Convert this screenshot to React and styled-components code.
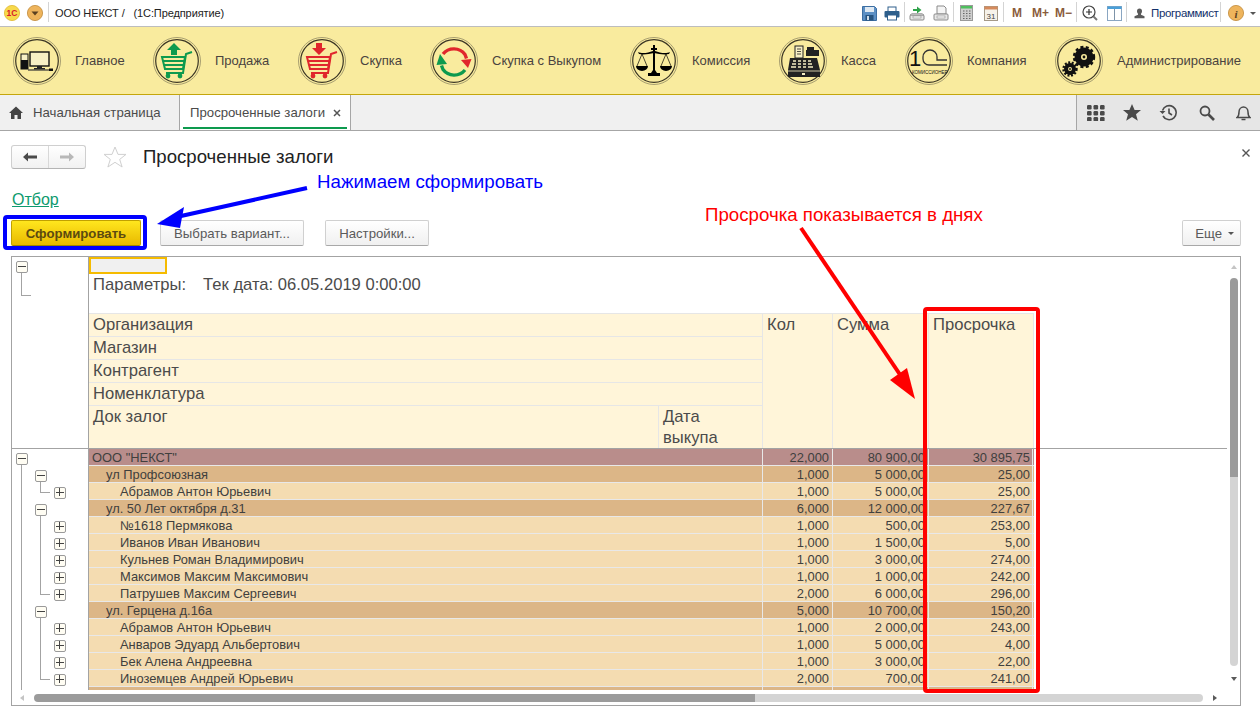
import React from "react";
import styled, { createGlobalStyle } from "styled-components";

const GlobalStyle = createGlobalStyle`
  html, body {
    margin: 0;
    padding: 0;
    background: #fff;
    overflow: hidden;
  }
  * { box-sizing: border-box; }
  #root { font-family: "Liberation Sans", Arial, sans-serif; }
`;

const Page = styled.div`
  position: relative;
  width: 1260px;
  height: 714px;
  overflow: hidden;
  background: #fff;
  color: #4b4b4b;
`;

/* top title strip */
const TitleBar = styled.div`
  height: 27px;
  display: flex;
  align-items: center;
  padding-left: 4px;
  border-bottom: 1px solid #bdbdbd;
  background: #fff;
`;

const AppTitle = styled.div`
  margin-left: 6px;
  font-size: 11px;
  color: #222;
  white-space: pre;
  letter-spacing: -0.1px;
`;

const ToolSep = styled.span`
  width: 1px;
  height: 20px;
  margin-bottom: 3px;
  background: #d4d4d4;
  flex: none;
`;

const Tools = styled.div`
  margin-left: auto;
  display: flex;
  align-items: center;
  height: 26px;
`;

const ToolBtn = styled.span`
  width: ${p => p.$w || 24}px;
  display: flex;
  justify-content: ${p => p.$align || "center"};
  align-items: center;
  padding-left: ${p => p.$pl || 0}px;
  flex: none;
`;

const MemBtn = styled(ToolBtn)`
  font-size: 12px;
  font-weight: 700;
  color: #8a5c3c;
`;

const UserName = styled.span`
  font-size: 11.5px;
  color: #12306a;
  margin-left: 6px;
  margin-right: 3px;
  width: 66px;
  white-space: nowrap;
  letter-spacing: -0.35px;
`;

/* sections */
const SectionBar = styled.div`
  height: 68px;
  display: flex;
  align-items: center;
  gap: 28px;
  padding-left: 13px;
  background: #f9eb9e;
  border-bottom: 1px solid #c4a60c;
`;

const SectionItem = styled.div`
  display: flex;
  align-items: center;
  gap: 14px;
  flex: none;
  width: ${p => p.$w}px;
`;

const SectionLabel = styled.span`
  font-size: 13px;
  color: #4a4340;
  white-space: nowrap;
`;

/* open tabs */
const TabBar = styled.div`
  height: 36px;
  display: flex;
  background: #f0f0f0;
  border-bottom: 1px solid #a6a6a6;
`;

const HomeTab = styled.div`
  width: 180px;
  display: flex;
  align-items: center;
  gap: 10px;
  padding-left: 9px;
  font-size: 13.2px;
  color: #4b4b4b;
  border-right: 1px solid #a6a6a6;
`;

const ActiveTab = styled.div`
  position: relative;
  width: 171px;
  display: flex;
  align-items: center;
  padding-left: 10px;
  gap: 8px;
  font-size: 13.2px;
  color: #4b4b4b;
  background: #fff;
  border-right: 1px solid #a6a6a6;
  white-space: nowrap;

  &::after {
    content: "";
    position: absolute;
    left: 3px;
    right: 3px;
    bottom: 1px;
    height: 2px;
    background: #0d9a4e;
  }
`;

const TabRight = styled.div`
  margin-left: auto;
  width: 184px;
  display: flex;
  align-items: center;
  padding-left: 10px;
  gap: 18px;
  background: #e6e6e6;
  border-left: 1px solid #a6a6a6;
`;

/* form */
const Form = styled.div`
  padding: 0 8px 0 11px;
`;

const FormHead = styled.div`
  height: 24px;
  margin-top: 14px;
  display: flex;
  align-items: center;
`;

const NavGroup = styled.div`
  width: 75px;
  height: 24px;
  display: flex;
  border: 1px solid #cfcfcf;
  border-bottom-color: #b4b4b4;
  border-radius: 3px;
  background: linear-gradient(#ffffff, #f1f1f1);
`;

const NavBtn = styled.span`
  flex: 1;
  display: flex;
  align-items: center;
  justify-content: center;
  & + & { border-left: 1px solid #d8d8d8; }
`;

const FavStar = styled.span`
  display: flex;
  margin: 0 16px 0 17px;
`;

const FormTitle = styled.h1`
  margin: 0;
  font-size: 18.6px;
  font-weight: 400;
  color: #222;
  white-space: nowrap;
`;

const CloseForm = styled.span`
  margin-left: auto;
  display: flex;
  margin-right: 2px;
  margin-bottom: 9px;
`;

const FilterLink = styled.a`
  display: block;
  width: fit-content;
  margin: 21px 0 0 1px;
  height: 21px;
  line-height: 20px;
  font-size: 16px;
  color: #0d9a6e;
  text-decoration: underline;
`;

const ActionRow = styled.div`
  margin: 9px 11px 0 0;
  height: 26px;
  display: flex;
  align-items: stretch;
`;

const Btn = styled.button`
  width: ${p => p.$w}px;
  margin-left: ${p => p.$ml || 0}px;
  padding: 0;
  font-family: inherit;
  font-size: 13.2px;
  color: #5a5a5a;
  white-space: nowrap;
  border: 1px solid #d0d0d0;
  border-bottom-color: #a8a8a8;
  border-radius: 2px;
  background: linear-gradient(#ffffff, #f0f0f0);
`;

const PrimaryBtn = styled(Btn)`
  font-weight: 700;
  color: #5c4a10;
  border-color: #c0a000;
  border-bottom-color: #a08800;
  background: linear-gradient(#ffe61e, #e8b900);
`;

const MoreBtn = styled(Btn)`
  margin-left: auto;
  display: flex;
  align-items: center;
  justify-content: flex-end;
  gap: 6px;
  padding-right: 6px;
`;

const Caret = styled.span`
  width: 0;
  height: 0;
  border-left: 3px solid transparent;
  border-right: 3px solid transparent;
  border-top: 3px solid #555;
`;

/* report */
const Report = styled.div`
  position: relative;
  margin: 10px 11px 0 0;
  height: 450px;
  border: 1px solid #a3a3a3;
  overflow: hidden;
  background: #fff;
`;

const HeadBlock = styled.div`
  display: flex;
  width: 1215px;
  height: 192px;
  border-bottom: 1px solid #a3a3a3;
`;

const Gutter = styled.div`
  width: 77px;
  flex: none;
  border-right: 1px solid #a3a3a3;
`;

const HeadMain = styled.div`
  flex: 1;
`;

const SelCell = styled.div`
  width: 78px;
  height: 17px;
  border: 2px solid #f5bb00;
  background: #f0f0f0;
`;

const Params = styled.div`
  height: 39px;
  padding: 2px 0 0 4px;
  line-height: 18px;
  font-size: 16.6px;
  color: #4b4b4b;
  display: flex;
  gap: 17px;
`;

const HeadGrid = styled.div`
  display: grid;
  grid-template-columns: 674px 70px 96px 105px;
  width: 945px;
  height: 135px;
  border-top: 1px solid #e6e6e6;
  background: #fff5d9;
  font-size: 16.6px;
  line-height: 20px;
  color: #4b4b4b;
`;

const HeadStack = styled.div`
  display: grid;
  grid-template-rows: 23px 23px 23px 23px 1fr;
  border-right: 1px solid #e6e6e6;
`;

const HeadRow = styled.div`
  padding: 1px 0 0 4px;
  border-bottom: 1px solid #e6e6e6;
`;

const HeadSplit = styled.div`
  display: grid;
  grid-template-columns: 569px 1fr;
`;

const HeadText = styled.div`
  padding-left: 4px;
  line-height: 21px;
  & + & { border-left: 1px solid #e6e6e6; }
`;

const HeadCol = styled.div`
  padding: 1px 0 0 4px;
  border-right: 1px solid #e6e6e6;
`;

const BodyBlock = styled.div`
  display: flex;
  height: 241px;
  overflow: hidden;
`;

const TreeRow = styled.div`
  position: relative;
  height: 17px;
  padding: 4px 0 0 ${p => 4 + p.$level * 19}px;
`;

const TreeBox = styled.span`
  display: flex;
  width: 12px;
  height: 12px;
  align-items: center;
  justify-content: center;
  position: relative;
  z-index: 1;
  border: 1px solid #9a9a9a;
  border-radius: 2px;
  background: #fffdf3;
  font-size: 0;

  &::before {
    content: "";
    position: absolute;
    width: 8px;
    height: 1px;
    left: 1px;
    top: 4px;
    background: #444;
  }
  &::after {
    content: "";
    display: ${p => (p.$plus ? "block" : "none")};
    position: absolute;
    width: 1px;
    height: 8px;
    left: 4px;
    top: 0;
    background: #444;
  }
`;

// vertical tree line, goes through the row
const TreeLine = styled.i`
  position: absolute;
  left: ${p => p.$x}px;
  top: ${p => p.$top || 0}px;
  bottom: ${p => p.$bottom || 0}px;
  width: 1px;
  background: #a3a3a3;
`;

const TreeElbow = styled.i`
  position: absolute;
  left: ${p => p.$x}px;
  top: ${p => p.$top || 0}px;
  width: 10px;
  height: ${p => p.$h || 10}px;
  border-left: 1px solid #a3a3a3;
  border-bottom: 1px solid #a3a3a3;
`;

const TopTree = styled.div`
  position: relative;
  height: 40px;
  padding: 4px 0 0 4px;
`;

const DataRows = styled.div`
  width: 945px;
  flex: none;
`;

const DataRow = styled.div`
  display: grid;
  grid-template-columns: 674px 70px 96px 104px;
  height: 17px;
  border-bottom: 1px solid #e8e8e8;
  background: ${p => ({ 1: "#b98d8b", 2: "#dcb687", 3: "#f4dcb1" })[p.$level]};
  font-size: 12.9px;
  line-height: 18px;
  color: #40403e;
`;

const NameCell = styled.div`
  padding-left: ${p => 3 + (p.$level - 1) * 14}px;
  border-right: 1px solid #e8e8e8;
  white-space: nowrap;
`;

const NumCell = styled.div`
  padding-right: 3px;
  text-align: right;
  border-right: 1px solid #e8e8e8;
  white-space: nowrap;
  &:last-child { padding-right: 2px; }
`;

/* scroll bars lie over the report */
const VScroll = styled.div`
  position: absolute;
  right: 2px;
  top: 21px;
  width: 8px;
  height: 388px;
  border-radius: 4px;
  background: linear-gradient(#9b9b9b 0 199px, #d4d4d4 199px);
`;

const HScroll = styled.div`
  position: absolute;
  left: 22px;
  bottom: 3px;
  width: 1169px;
  height: 8px;
  border-radius: 4px;
  background: linear-gradient(90deg, #9b9b9b 0 721px, #d4d4d4 721px);
`;

const ScrollArrow = styled.span`
  position: absolute;
  left: ${p => p.$x}px;
  top: ${p => p.$y}px;
  width: 0;
  height: 0;
  ${p => (p.$dir === "up" || p.$dir === "down") ? `
    border-left: 3px solid transparent;
    border-right: 3px solid transparent;
  ` : `
    border-top: 3px solid transparent;
    border-bottom: 3px solid transparent;
  `}
  ${p => p.$dir === "up" && `border-bottom: 4px solid ${p.$c};`}
  ${p => p.$dir === "down" && `border-top: 4px solid ${p.$c};`}
  ${p => p.$dir === "left" && `border-right: 4px solid ${p.$c};`}
  ${p => p.$dir === "right" && `border-left: 4px solid ${p.$c};`}
`;

/* hand drawn notes on top of the screenshot */
const Notes = styled.svg`
  position: absolute;
  left: 0;
  top: 0;
  pointer-events: none;
`;

const Note = styled.div`
  position: absolute;
  left: ${p => p.$x}px;
  top: ${p => p.$y}px;
  font-size: 18.7px;
  line-height: 20px;
  color: ${p => p.$c};
  white-space: nowrap;
`;

const Ring = ({ children }) => (
  <svg width="48" height="48" viewBox="0 0 48 48">
    <circle cx="24" cy="24" r="23.5" fill="none" stroke="#a89f70" strokeWidth="1" />
    <circle cx="24" cy="24" r="21.3" fill="none" stroke="#3a3524" strokeWidth="1.2" />
    {children}
  </svg>
);

const Cart = ({ color, down }) => (
  <g>
    {down ? (
      <path d="M18 6h6v5h4l-7 7-7-7h4z" fill={color} />
    ) : (
      <path d="M21 6l7 7h-4v5h-6v-5h-4z" fill={color} />
    )}
    <path d="M39 15l-6 2-3 19H13" fill="none" stroke={color} strokeWidth="2" />
    <path d="M9 20h23l-2 12H12z" fill="none" stroke={color} strokeWidth="2" />
    <path d="M10 24h21M11 28h19" stroke={color} strokeWidth="1.8" />
    <circle cx="15" cy="39" r="2.4" fill={color} />
    <circle cx="27" cy="39" r="2.4" fill={color} />
  </g>
);

const ComputerPic = () => (
  <g>
    <rect x="17" y="15" width="19" height="14" fill="#f7efc4" stroke="#111" strokeWidth="1.4" />
    <path d="M24 29h5v2h3v1.5H21V31h3z" fill="#222" />
    <rect x="8" y="17" width="7" height="15" fill="#f7efc4" stroke="#111" strokeWidth="1" />
    <rect x="8" y="23" width="7" height="9" fill="#111" />
    <path d="M15 33h24" stroke="#333" strokeWidth="1.2" />
    <rect x="36" y="31.5" width="4" height="2.5" fill="#111" />
  </g>
);

const SwapPic = () => (
  <g fill="none" strokeWidth="3.4">
    <path d="M13 17a14 14 0 0 1 22 0.5l1.5 4" stroke="#e0262c" />
    <path d="M35 33a14 14 0 0 1-22-0.5l-1.500-4" stroke="#0d9a4e" />
    <path d="M31 23l10.500-1-3.500 9z" fill="#e0262c" stroke="none" />
    <path d="M17 27l-10.500 1 3.500-11z" fill="#0d9a4e" stroke="none" />
  </g>
);

const ScalesPic = () => (
  <g fill="#000">
    <path d="M23 8h2v3h2v2h-2v20l2 3h3v3H18v-3h3l2-3V13h-2v-2h2z" />
    <path d="M8 15c4 2 10 1 15-1h2c5 2 11 3 15 1l-1 2c-5 1-10 0-15-1-5 1-10 2-15 1z" />
    <path d="M12 17l-5 12M12 17l5 12M36 17l-5 12M36 17l5 12" stroke="#000" strokeWidth="0.7" fill="none" />
    <path d="M6 29h12a6 5 0 0 1-12 0zM30 29h12a6 5 0 0 1-12 0z" />
  </g>
);

const RegisterPic = () => (
  <g>
    <rect x="16" y="9" width="8" height="12" fill="#f7efc4" stroke="#222" strokeWidth="1" />
    <path d="M18 12h4M18 14.500h4M18 17h4" stroke="#222" strokeWidth="0.8" />
    <path d="M28 10h7v3h5v6H27v-6h1z" fill="#222" />
    <path d="M11 21h27l3 12v7H9v-7z" fill="#222" />
    <path d="M14 24h3M19 24h3M24 24h3M29 24h3M13 27h4M19 27h3M24 27h3M29 27h4M12 30h5M19 30h3M24 30h3M29 30h5" stroke="#f7efc4" strokeWidth="1.6" />
    <path d="M9 34h32" stroke="#f7efc4" strokeWidth="0.8" />
    <rect x="23" y="36" width="3" height="2" fill="#f7efc4" />
  </g>
);

const OneCPic = () => (
  <g>
    <text x="4" y="29" fontFamily="Liberation Sans, sans-serif" fontSize="22" fill="#111">1</text>
    <path d="M42 28H24a6 6 0 0 1-6-6v-2a7 7 0 0 1 14 0v3h10" fill="none" stroke="#333" strokeWidth="1.300" />
    <text x="7" y="36.500" fontFamily="Liberation Sans, sans-serif" fontSize="4.500" fill="#111">КОМИССИОНЕР</text>
  </g>
);

const Gear = ({ x, y, r }) => (
  <g>
    <circle cx={x} cy={y} r={r} fill="none" stroke="#111" strokeWidth="2.400" strokeDasharray={`${r * 0.3} ${r * 0.24}`} />
    <circle cx={x} cy={y} r={r - 0.5} fill="#111" />
    <circle cx={x} cy={y} r={r * 0.3} fill="#f9eb9e" />
    <circle cx={x} cy={y} r={r * 0.14} fill="#111" />
  </g>
);

const GearsPic = () => (
  <g>
    <Gear x={29} y={20} r={10} />
    <Gear x={15} y={32} r={6.500} />
  </g>
);

const sections = [
  { title: "Главное", w: 112, pic: <ComputerPic /> },
  { title: "Продажа", w: 117, pic: <Cart color="#0d9a4e" /> },
  { title: "Скупка", w: 104, pic: <Cart color="#e0262c" down /> },
  { title: "Скупка с Выкупом", w: 172, pic: <SwapPic /> },
  { title: "Комиссия", w: 121, pic: <ScalesPic /> },
  { title: "Касса", w: 98, pic: <RegisterPic /> },
  { title: "Компания", w: 122, pic: <OneCPic /> },
  { title: "Администрирование", w: 187, pic: <GearsPic /> },
];

const rows = [
  { level: 1, name: 'ООО "НЕКСТ"', qty: "22,000", sum: "80 900,00", late: "30 895,75" },
  { level: 2, name: "ул Профсоюзная", qty: "1,000", sum: "5 000,00", late: "25,00" },
  { level: 3, name: "Абрамов Антон Юрьевич", qty: "1,000", sum: "5 000,00", late: "25,00", last: true },
  { level: 2, name: "ул. 50 Лет октября д.31", qty: "6,000", sum: "12 000,00", late: "227,67" },
  { level: 3, name: "№1618 Пермякова", qty: "1,000", sum: "500,00", late: "253,00" },
  { level: 3, name: "Иванов Иван Иванович", qty: "1,000", sum: "1 500,00", late: "5,00" },
  { level: 3, name: "Кульнев Роман Владимирович", qty: "1,000", sum: "3 000,00", late: "274,00" },
  { level: 3, name: "Максимов Максим Максимович", qty: "1,000", sum: "1 000,00", late: "242,00" },
  { level: 3, name: "Патрушев Максим Сергеевич", qty: "2,000", sum: "6 000,00", late: "296,00", last: true },
  { level: 2, name: "ул. Герцена д.16а", qty: "5,000", sum: "10 700,00", late: "150,20" },
  { level: 3, name: "Абрамов Антон Юрьевич", qty: "1,000", sum: "2 000,00", late: "243,00" },
  { level: 3, name: "Анваров Эдуард Альбертович", qty: "1,000", sum: "5 000,00", late: "4,00" },
  { level: 3, name: "Бек Алена Андреевна", qty: "1,000", sum: "3 000,00", late: "22,00" },
  { level: 3, name: "Иноземцев Андрей Юрьевич", qty: "2,000", sum: "700,00", late: "241,00", last: true },
  { level: 2, name: "", qty: "", sum: "", late: "" },
];

function TreeCell({ row, index }) {
  const plus = row.level === 3;
  return (
    <TreeRow $level={row.level - 1}>
      {row.level > 1 && <TreeLine $x={9} />}
      {index === 0 && <TreeLine $x={9} $top={8} />}
      {row.level === 2 && row.name && <TreeLine $x={28} $top={8} />}
      {row.level === 3 && !row.last && <TreeLine $x={28} />}
      {row.level === 3 && row.last && <TreeElbow $x={28} />}
      {row.name && <TreeBox $plus={plus} />}
    </TreeRow>
  );
}

export default function App() {
  return (
    <Page>
      <GlobalStyle />
      <TitleBar>
        <svg width="16" height="16" viewBox="0 0 16 16">
          <circle cx="8" cy="8" r="7.6" fill="#f7d94c" stroke="#e0b830" strokeWidth="0.8" />
          <text x="2.500" y="11" fontSize="8.500" fontWeight="700" fill="#d8202a" fontFamily="Liberation Sans, sans-serif">1С</text>
        </svg>
        <svg width="16" height="16" viewBox="0 0 16 16" style={{ marginLeft: 7 }}>
          <circle cx="8" cy="8" r="7.600" fill="#eeb45c" stroke="#c08a3a" strokeWidth="0.8" />
          <path d="M4.500 6.500h7L8 10.500z" fill="#5a4020" />
        </svg>
        <ToolSep style={{ marginLeft: 5 }} />
        <AppTitle>ООО НЕКСТ /   (1С:Предприятие)</AppTitle>
        <Tools>
          <ToolBtn $w={22}>
            <svg width="15" height="15" viewBox="0 0 15 15">
              <path d="M0.500 0.500h12l2 2v12H0.500z" fill="#5b8fc4" stroke="#3c6ea2" />
              <rect x="3" y="1" width="9" height="5" fill="#dfe9f2" />
              <rect x="3.500" y="9" width="8" height="5.500" fill="#26537f" />
              <rect x="5" y="10" width="2" height="4" fill="#cfdde9" />
            </svg>
          </ToolBtn>
          <ToolBtn $w={24}>
            <svg width="16" height="15" viewBox="0 0 16 15">
              <rect x="4" y="1" width="8" height="5" fill="#fff" stroke="#2e5f8c" />
              <rect x="0.500" y="5" width="15" height="6.500" rx="1" fill="#2e5f8c" />
              <rect x="3.500" y="9" width="9" height="5" fill="#fff" stroke="#2e5f8c" />
            </svg>
          </ToolBtn>
          <ToolSep />
          <ToolBtn $w={24}>
            <svg width="16" height="16" viewBox="0 0 16 16">
              <path d="M4 4h4V1.500L12.500 5 8 8.500V6H4z" fill="#2fa34a" />
              <rect x="1" y="10" width="14" height="5" rx="1" fill="#e8e8e8" stroke="#8a8a8a" />
              <path d="M3 8.500h10l2 1.500H1z" fill="#cfcfcf" stroke="#8a8a8a" strokeWidth="0.6" />
              <rect x="4" y="11" width="8" height="2" fill="#fff" stroke="#8a8a8a" strokeWidth="0.6" />
            </svg>
          </ToolBtn>
          <ToolBtn $w={24}>
            <svg width="16" height="16" viewBox="0 0 16 16">
              <path d="M5 1h6l2 2v6H4V1z" fill="#f4f4f4" stroke="#8a8a8a" />
              <rect x="1" y="9" width="14" height="6" rx="1" fill="#e8e8e8" stroke="#8a8a8a" />
              <rect x="4" y="11" width="8" height="2" fill="#fff" stroke="#8a8a8a" strokeWidth="0.6" />
            </svg>
          </ToolBtn>
          <ToolSep />
          <ToolBtn $w={24}>
            <svg width="13" height="16" viewBox="0 0 13 16">
              <rect x="0.500" y="0.500" width="12" height="15" fill="#cfcfcf" stroke="#9a9a9a" />
              <rect x="1" y="1" width="11" height="2.500" fill="#4fbf5e" />
              <path d="M3 6h1.500M6 6h1.500M9 6h1.500M3 8.500h1.500M6 8.500h1.500M9 8.500h1.500M3 11h1.500M6 11h1.500M9 11h1.500M3 13.500h1.500M6 13.500h1.500M9 13.500h1.500" stroke="#666" strokeWidth="1.200" />
            </svg>
          </ToolBtn>
          <ToolBtn $w={25}>
            <svg width="14" height="16" viewBox="0 0 14 16">
              <rect x="0.500" y="1.500" width="13" height="14" fill="#f6f2ea" stroke="#a59a88" />
              <rect x="0.500" y="1.500" width="13" height="3" fill="#d58a5c" />
              <text x="7" y="13.500" textAnchor="middle" fontSize="8" fill="#444" fontFamily="Liberation Sans, sans-serif">31</text>
            </svg>
          </ToolBtn>
          <ToolSep />
          <MemBtn $w={26}>M</MemBtn>
          <MemBtn $w={21}>M+</MemBtn>
          <MemBtn $w={25}>M−</MemBtn>
          <ToolSep />
          <ToolBtn $w={25}>
            <svg width="16" height="16" viewBox="0 0 16 16">
              <circle cx="7" cy="7" r="6" fill="#fff" stroke="#444" strokeWidth="1.200" />
              <path d="M7 4v6M4 7h6" stroke="#333" strokeWidth="1.200" />
              <path d="M11.500 11.500l3.500 3.500" stroke="#777" strokeWidth="2" />
            </svg>
          </ToolBtn>
          <ToolBtn $w={24}>
            <svg width="15" height="15" viewBox="0 0 15 15">
              <rect x="0.500" y="0.500" width="14" height="14" fill="#fff" stroke="#8aa6c2" />
              <rect x="0.500" y="0.500" width="14" height="2.500" fill="#4a9fd8" />
              <path d="M7.500 3v11" stroke="#7d93a8" />
            </svg>
          </ToolBtn>
          <ToolSep />
          <ToolBtn $w={18} $align="flex-end">
            <svg width="11" height="11" viewBox="0 0 11 11">
              <path d="M5.500 0.500a2.500 2.800 0 0 1 2.500 2.800c0 1-0.500 2-1 2.500v1l3.500 1.500v2H0.500v-2L4 6.800v-1c-0.500-0.500-1-1.500-1-2.500a2.500 2.800 0 0 1 2.500-2.800z" fill="#5a5a5a" />
            </svg>
          </ToolBtn>
          <UserName>Программист</UserName>
          <ToolSep />
          <ToolBtn $w={23} $align="flex-end">
            <svg width="16" height="16" viewBox="0 0 16 16">
              <circle cx="8" cy="8" r="7.600" fill="#eeb45c" stroke="#c08a3a" strokeWidth="0.8" />
              <text x="8" y="12.500" textAnchor="middle" fontSize="11" fontWeight="700" fontStyle="italic" fill="#5a4020" fontFamily="Liberation Serif, serif">i</text>
            </svg>
          </ToolBtn>
          <ToolBtn $w={16} $align="flex-start" $pl={6}>
            <Caret />
          </ToolBtn>
        </Tools>
      </TitleBar>

      <SectionBar>
        {sections.map(s => (
          <SectionItem key={s.title} $w={s.w}>
            <Ring>{s.pic}</Ring>
            <SectionLabel>{s.title}</SectionLabel>
          </SectionItem>
        ))}
      </SectionBar>

      <TabBar>
        <HomeTab>
          <svg width="14" height="13" viewBox="0 0 14 13">
            <path d="M7 0.500L14 7h-2v6H8.500V9h-3v4H2V7H0z" fill="#444" />
          </svg>
          Начальная страница
        </HomeTab>
        <ActiveTab>
          Просроченные залоги
          <svg width="8" height="8" viewBox="0 0 8 8">
            <path d="M1 1l6 6M7 1l-6 6" stroke="#555" strokeWidth="1.500" />
          </svg>
        </ActiveTab>
        <TabRight>
          <svg width="18" height="16" viewBox="0 0 18 16" fill="#4a4a4a">
            {[0, 6, 12].map(y => [0, 6.500, 13].map(x => (
              <rect key={`${x}-${y}`} x={x} y={y} width="4.600" height="4.400" rx="1.200" />
            )))}
          </svg>
          <svg width="18" height="17" viewBox="0 0 18 17">
            <path d="M9 0l2.600 6H18l-5 4.200 1.800 6.500L9 13l-5.800 3.700L5 10.200 0 6h6.400z" fill="#4a4a4a" />
          </svg>
          <svg width="18" height="17" viewBox="0 0 18 17" fill="none" stroke="#4a4a4a" strokeWidth="1.600">
            <path d="M3.500 6.500a7 7 0 1 1 0.500 5.500" />
            <path d="M0.500 7h6L3.500 10z" fill="#4a4a4a" stroke="none" />
            <path d="M10 4.500V9l3 2" />
          </svg>
          <svg width="16" height="16" viewBox="0 0 16 16" fill="none" stroke="#4a4a4a" style={{ marginLeft: 4 }}>
            <circle cx="6" cy="6" r="4.500" strokeWidth="1.800" />
            <path d="M9.500 9.500L15 15" strokeWidth="2.600" />
          </svg>
          <svg width="15" height="17" viewBox="0 0 15 17" fill="none" stroke="#4a4a4a" strokeWidth="1.500" style={{ marginLeft: 3 }}>
            <path d="M1 13.500c1.500-1 2-2.500 2-5.500a4.500 5 0 0 1 9 0c0 3 0.500 4.500 2 5.500z" />
            <path d="M5.500 15.500h4" />
          </svg>
        </TabRight>
      </TabBar>

      <Form>
        <FormHead>
          <NavGroup>
            <NavBtn>
              <svg width="14" height="10" viewBox="0 0 14 10">
                <path d="M0 5l5-4.500V3.500h9v3H5v3z" fill="#4a4a4a" />
              </svg>
            </NavBtn>
            <NavBtn>
              <svg width="14" height="10" viewBox="0 0 14 10">
                <path d="M14 5L9 0.500V3.500H0v3h9v3z" fill="#b8b8b8" />
              </svg>
            </NavBtn>
          </NavGroup>
          <FavStar>
            <svg width="24" height="22" viewBox="0 0 24 22">
              <path d="M12 1l3 7.400h8l-6.300 5 2.400 7.600L12 16.300 4.900 21l2.400-7.600L1 8.400h8z" fill="#fff" stroke="#d0d0d0" />
            </svg>
          </FavStar>
          <FormTitle>Просроченные залоги</FormTitle>
          <CloseForm>
            <svg width="8" height="8" viewBox="0 0 8 8">
              <path d="M0.500 0.500l7 7M7.500 0.500l-7 7" stroke="#555" strokeWidth="1.400" />
            </svg>
          </CloseForm>
        </FormHead>

        <FilterLink>Отбор</FilterLink>

        <ActionRow>
          <PrimaryBtn $w={130}>Сформировать</PrimaryBtn>
          <Btn $w={144} $ml={19}>Выбрать вариант...</Btn>
          <Btn $w={104} $ml={21}>Настройки...</Btn>
          <MoreBtn $w={59}>Еще <Caret /></MoreBtn>
        </ActionRow>

        <Report>
          <HeadBlock>
            <Gutter>
              <TopTree>
                <TreeBox />
                <TreeElbow $x={9} $top={16} $h={23} />
              </TopTree>
            </Gutter>
            <HeadMain>
              <SelCell />
              <Params>
                <span>Параметры:</span>
                <span>Тек дата: 06.05.2019 0:00:00</span>
              </Params>
              <HeadGrid>
                <HeadStack>
                  <HeadRow>Организация</HeadRow>
                  <HeadRow>Магазин</HeadRow>
                  <HeadRow>Контрагент</HeadRow>
                  <HeadRow>Номенклатура</HeadRow>
                  <HeadSplit>
                    <HeadText>Док залог</HeadText>
                    <HeadText>Дата<br />выкупа</HeadText>
                  </HeadSplit>
                </HeadStack>
                <HeadCol>Кол</HeadCol>
                <HeadCol>Сумма</HeadCol>
                <HeadCol>Просрочка</HeadCol>
              </HeadGrid>
            </HeadMain>
          </HeadBlock>

          <BodyBlock>
            <Gutter>
              {rows.map((r, i) => <TreeCell key={i} row={r} index={i} />)}
            </Gutter>
            <DataRows>
              {rows.map((r, i) => (
                <DataRow key={i} $level={r.level}>
                  <NameCell $level={r.level}>{r.name}</NameCell>
                  <NumCell>{r.qty}</NumCell>
                  <NumCell>{r.sum}</NumCell>
                  <NumCell>{r.late}</NumCell>
                </DataRow>
              ))}
            </DataRows>
          </BodyBlock>

          <ScrollArrow $dir="up" $x={1219} $y={8} $c="#c4c4c4" />
          <VScroll />
          <ScrollArrow $dir="down" $x={1219} $y={420} $c="#5a5a5a" />
          <ScrollArrow $dir="left" $x={8} $y={438} $c="#c4c4c4" />
          <HScroll />
          <ScrollArrow $dir="right" $x={1201} $y={438} $c="#5a5a5a" />
        </Report>
      </Form>

      {/* annotations */}
      <Notes width="1260" height="714" viewBox="0 0 1260 714">
        <rect x="5" y="217" width="140" height="31" rx="2" fill="none" stroke="#0000ff" strokeWidth="4" />
        <path d="M307 188L172 218" stroke="#0000ff" strokeWidth="4" fill="none" />
        <path d="M157 224L184 207L180 228z" fill="#0000ff" />
        <rect x="925" y="309" width="113" height="382" rx="2" fill="none" stroke="#ff0000" strokeWidth="4" />
        <path d="M801 228L905 382" stroke="#ff0000" strokeWidth="4" fill="none" />
        <path d="M915 399L907 368L890 380z" fill="#ff0000" />
      </Notes>
      <Note $x={317} $y={172} $c="#0000ff">Нажимаем сформировать</Note>
      <Note $x={705} $y={205} $c="#ff0000">Просрочка показывается в днях</Note>
    </Page>
  );
}
